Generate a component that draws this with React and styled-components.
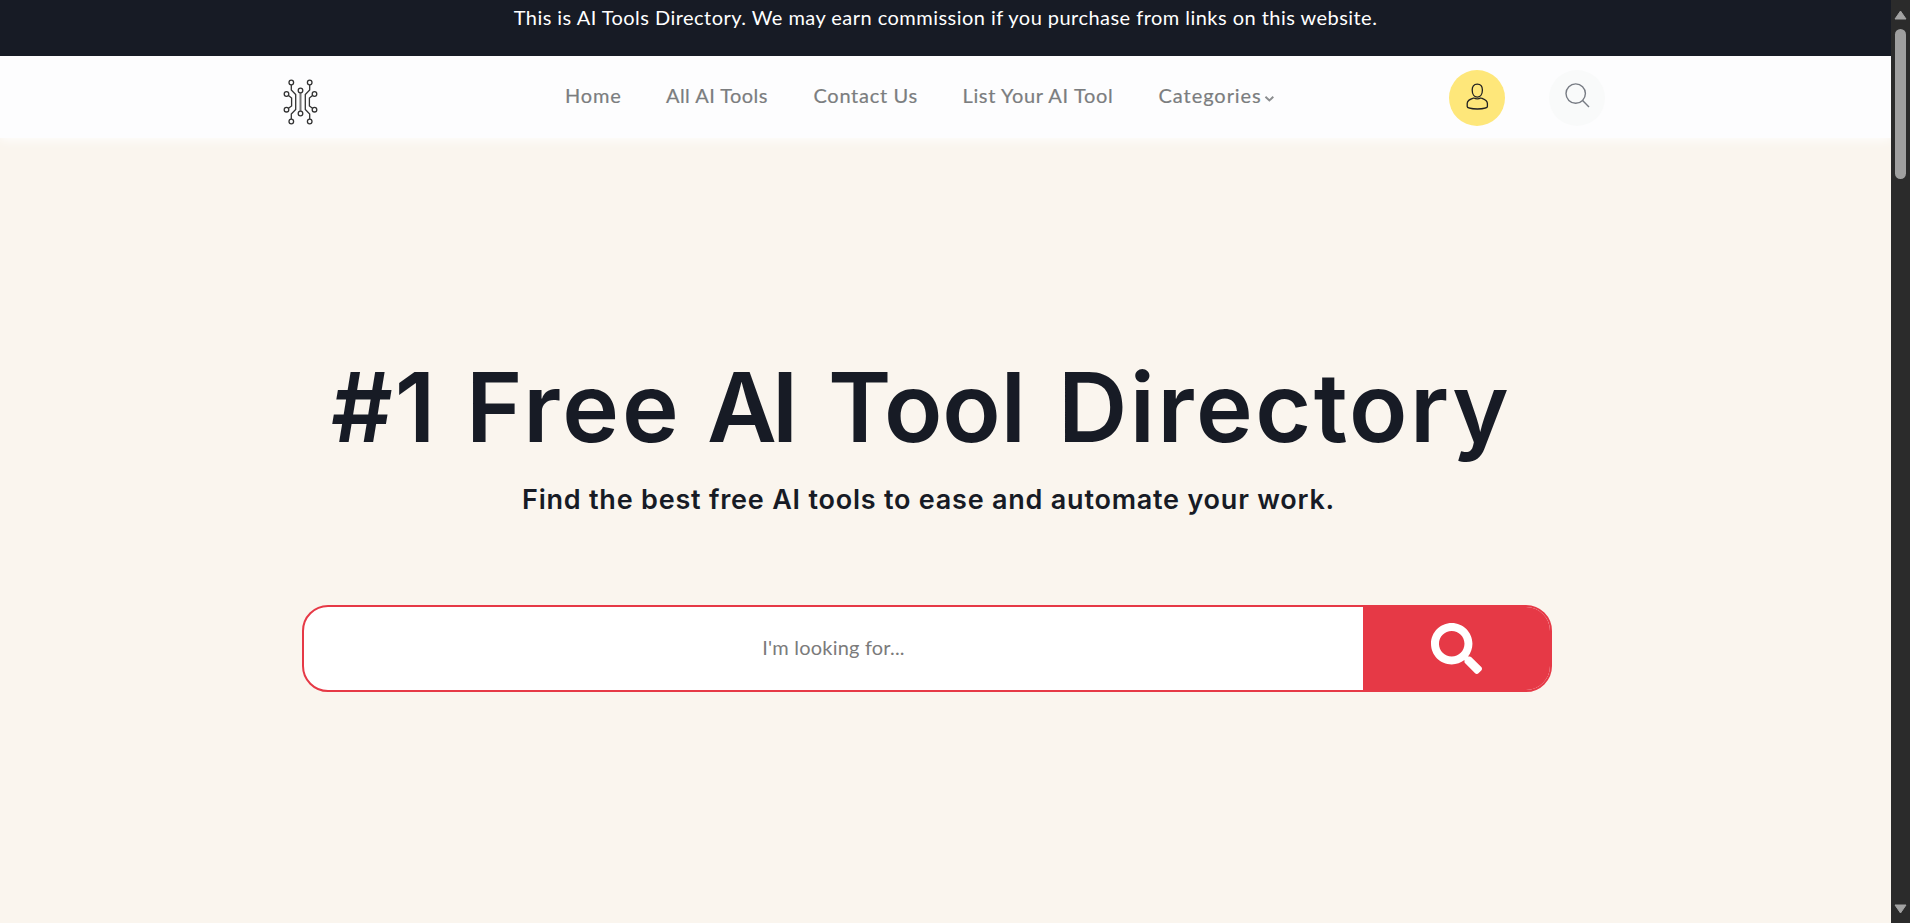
import React from 'react'
import styled, { createGlobalStyle } from 'styled-components'
import { FaSearch } from 'react-icons/fa'

const COLOR_DARK = '#171b25'
const COLOR_CREAM = '#faf5ee'
const COLOR_RED = '#e63946'
const COLOR_GREY = '#7b7d7f'

const FONT_HEADING = 'Inter, sans-serif'

const GlobalStyle = createGlobalStyle`
  * {
    box-sizing: border-box;
  }

  body {
    margin: 0;
    overflow: hidden;
    font-family: Lato, sans-serif;
    color: ${ COLOR_DARK };
    background-color: ${ COLOR_CREAM };
  }
`

const Window = styled.div`
  display: flex;
  height: 100vh;
`

const Page = styled.div`
  display: flex;
  flex-direction: column;
  flex: 1;
  min-width: 0;
`

const Notice = styled.div`
  position: relative;
  z-index: 1;
  height: 56px;
  padding-top: 2px;
  font-size: 20px;
  line-height: 30px;
  letter-spacing: .46px;
  text-align: center;
  white-space: nowrap;
  color: #fff;
  background-color: ${ COLOR_DARK };
`

const Container = styled.header`
  display: flex;
  height: 82px;
  padding-left: 270px;
  background-color: #fdfdfe;
  box-shadow: 0 2px 10px rgba(255, 255, 255, .9);
`

const Logo = styled.svg`
  width: 60px;
  height: 60px;
  margin-top: 14px;
`

const Nav = styled.nav`
  display: flex;
  margin-left: 235px;
  padding-top: 24px;
`

const Item = styled.a`
  display: flex;
  flex: none;
  width: ${ props => props.$width }px;
  font-size: 20px;
  line-height: 30px;
  letter-spacing: ${ props => props.$track }px;
  white-space: nowrap;
  color: ${ COLOR_GREY };
  -webkit-text-stroke: .2px ${ COLOR_GREY };
`

const Chevron = styled.svg`
  width: 11px;
  height: 8px;
  margin: 15px 0 0 2px;
`

const Round = styled.button`
  display: block;
  width: 56px;
  height: 56px;
  margin: 14px 0 0 ${ props => props.$left }px;
  padding: 0;
  border: 0;
  border-radius: 50%;
  background-color: ${ props => props.$color };
`

const Hero = styled.main`
  display: flex;
  flex-direction: column;
  align-items: flex-start;
  flex: 1;
  padding: 207px 0 0 302px;
`

const Title = styled.h1`
  display: flex;
  margin: 2px 0 -2px 29px;
  font-family: ${ FONT_HEADING };
  font-size: 96px;
  font-weight: 600;
  line-height: 120px;
`

const Word = styled.span`
  flex: none;
  width: ${ props => props.$width }px;
  letter-spacing: ${ props => props.$track }px;
  white-space: nowrap;
`

const Subtitle = styled.h2`
  margin: 15px 0 0 220px;
  font-family: ${ FONT_HEADING };
  font-size: 27px;
  font-weight: 600;
  line-height: 40px;
  letter-spacing: .78px;
  white-space: nowrap;
`

const SearchBox = styled.form`
  display: flex;
  width: 1250px;
  height: 87px;
  margin-top: 85px;
  overflow: hidden;
  border: 2px solid ${ COLOR_RED };
  border-radius: 26px;
  background-color: #fff;
`

const Input = styled.input`
  flex: 1;
  padding: 0 0 3px;
  border: 0;
  outline: 0;
  font-family: inherit;
  font-size: 20px;
  letter-spacing: .2px;
  text-align: center;
  background: transparent;

  &::placeholder {
    color: #7b7b7b;
    opacity: 1;
  }
`

const Submit = styled.button`
  display: flex;
  align-items: center;
  justify-content: center;
  width: 187px;
  padding: 0;
  border: 0;
  font-size: 51px;
  color: #fff;
  background-color: ${ COLOR_RED };
`

const Scrollbar = styled.aside`
  display: flex;
  flex-direction: column;
  align-items: center;
  width: 19px;
  padding: 10px 0 9px;
  background-color: #2b2b2b;
`

const Thumb = styled.div`
  width: 11px;
  height: 150px;
  margin: 9px 0 auto;
  border-radius: 6px;
  background-color: #9f9f9f;
`

const NODES = [
  [21.3, 12.5], [39.7, 12.5], [16.5, 24], [44.5, 24], [30.5, 20.5],
  [16.5, 39.7], [44.5, 39.7], [30.5, 43.5], [21.3, 51.5], [39.7, 51.5]
]

const LINKS = [
  { label: 'Home', width: 101, track: .8 },
  { label: 'All AI Tools', width: 147.5, track: .45 },
  { label: 'Contact Us', width: 149, track: .7 },
  { label: 'List Your AI Tool', width: 196, track: .65 },
  { label: 'Categories', width: 116, track: .95, menu: true }
]

const WORDS = [
  { text: '#1', width: 135, track: 2 },
  { text: 'Free', width: 241, track: 3 },
  { text: 'AI', width: 121, track: -5 },
  { text: 'Tool', width: 230, track: 0 },
  { text: 'Directory', width: 450, track: 2.5 }
]

const Arrow = ({ down }) => (
  <svg width='13' height='10' viewBox='0 0 13 10'>
    <path
      d={down ? 'M1 1H12L6.5 9Z' : 'M1 9H12L6.5 1Z'}
      fill='#a2a2a2'
      stroke='#a2a2a2'
      strokeLinejoin='round'
    />
  </svg>
)

const Header = () => (
  <Container>
    <Logo viewBox='0 0 60 60' fill='none' stroke='#333' strokeWidth='1.3'>
      <path d='M21.3 15V20L25.7 24.5V39.5L21.3 44V49' />
      <path d='M39.7 15V20L35.3 24.5V39.5L39.7 44V49' />
      <path d='M18.5 25.4L21.6 28V36L18.5 38.3M42.5 25.4L39.4 28V36L42.5 38.3' />
      <path d='M30.5 23V41' stroke='#777' strokeWidth='2' />
      {NODES.map(([x, y]) => <circle key={`${ x }-${ y }`} cx={x} cy={y} r='2.3' />)}
    </Logo>
    <Nav>
      {LINKS.map(({ label, width, track, menu }) => (
        <Item key={label} $width={width} $track={track}>
          {label}
          {menu && (
            <Chevron viewBox='0 0 11 8' fill='none' stroke='#8b8d8f' strokeWidth='2'>
              <path d='M1.5 1.7L5.5 5.5L9.5 1.7' />
            </Chevron>
          )}
        </Item>
      ))}
    </Nav>
    <Round $left={174.5} $color='#fee77a' aria-label='Account'>
      <svg width='56' height='56' viewBox='0 0 56 56' fill='none' stroke='#222' strokeWidth='1.3'>
        <path d='M28.3 14.2C32 14.2 33.4 16.9 33.4 20.1C33.4 24.3 31.3 27.2 28.3 27.2C25.3 27.2 23.2 24.3 23.2 20.1C23.2 16.9 24.6 14.2 28.3 14.2Z' />
        <path d='M24.7 28C21 29.4 18.2 30.1 18.2 33.5V36.5C18.2 37.8 22.5 39 28.3 39C34.2 39 38.4 37.8 38.4 36.5V33.5C38.4 30.1 35.4 29.4 31.9 28C29.6 29.1 27 29.1 24.7 28Z' />
      </svg>
    </Round>
    <Round $left={44} $color='#f9fafa' aria-label='Search'>
      <svg width='56' height='56' viewBox='0 0 56 56' fill='none' stroke='#777b83' strokeWidth='1.4'>
        <circle cx='26.7' cy='23.6' r='9.7' />
        <path d='M33.6 30.5L40 36.9' />
      </svg>
    </Round>
  </Container>
)

const App = () => (
  <Window>
    <GlobalStyle />
    <Page>
      <Notice>
        This is AI Tools Directory. We may earn commission if you purchase from links on this website.
      </Notice>
      <Header />
      <Hero>
        <Title>
          {WORDS.map(({ text, width, track }) => (
            <Word key={text} $width={width} $track={track}>{text}</Word>
          ))}
        </Title>
        <Subtitle>Find the best free AI tools to ease and automate your work.</Subtitle>
        <SearchBox>
          <Input placeholder={`I'm looking for...`} />
          <Submit type='button' aria-label='Search'>
            <FaSearch />
          </Submit>
        </SearchBox>
      </Hero>
    </Page>
    <Scrollbar>
      <Arrow />
      <Thumb />
      <Arrow down />
    </Scrollbar>
  </Window>
)

export default App
